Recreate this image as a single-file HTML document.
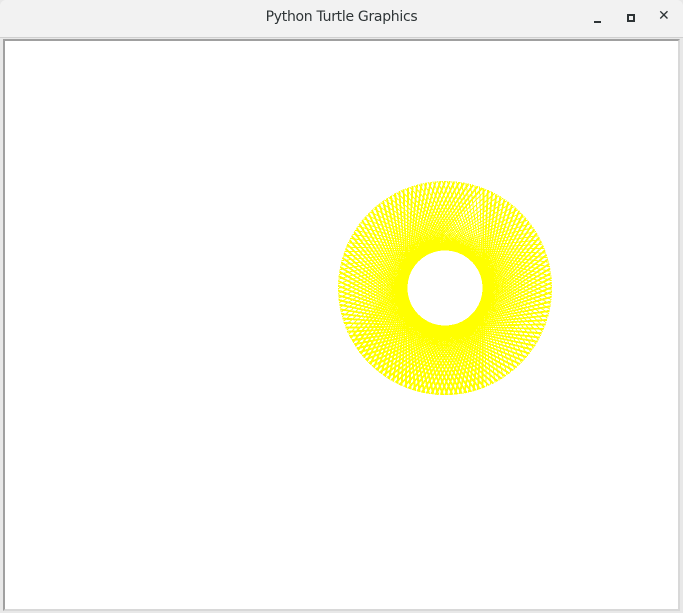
<!DOCTYPE html>
<html><head><style>
body{margin:0;width:683px;height:613px;overflow:hidden;background:#e8e8e8;font-family:"DejaVu Sans","Liberation Sans",sans-serif}
#tb{position:absolute;left:0;top:0;width:683px;height:37px;background:#f2f2f2;border-bottom:1px solid #d0d0d0;border-radius:6px 6px 0 0}
#tt{position:absolute;left:0;width:683px;top:9px;text-align:center;font-size:14px;color:#2e3436;letter-spacing:-0.3px}
#cv{position:absolute;left:3px;top:39px;width:673px;height:568px;background:#fff;border:2px solid #a0a0a0;border-right-color:#d8d8d8;border-bottom-color:#d8d8d8}
svg{position:absolute;left:0;top:0}
</style></head><body>
<div id="tb"><div id="tt">Python Turtle Graphics</div>
<div style="position:absolute;left:594px;top:21px;width:7px;height:2px;background:#2e3436"></div>
<div style="position:absolute;left:627px;top:14px;width:4px;height:4px;border:2px solid #2e3436"></div>
<div style="position:absolute;left:658px;top:8px;font-size:14px;font-weight:bold;color:#2e3436">✕</div>
</div>
<div id="cv"></div>
<svg id="s" width="683" height="613" shape-rendering="crispEdges"></svg>
<script>
var s=document.getElementById('s'),cx=445,cy=288,R=107,a=Math.acos(38/R),h='';
for(var i=0;i<230;i++){var t=i*2*Math.PI/230+i*0.017;
h+='<line x1="'+(cx+R*Math.cos(t-a)).toFixed(1)+'" y1="'+(cy+R*Math.sin(t-a)).toFixed(1)+'" x2="'+(cx+R*Math.cos(t+a)).toFixed(1)+'" y2="'+(cy+R*Math.sin(t+a)).toFixed(1)+'" stroke="#ffff00" stroke-width="1"/>';}
s.innerHTML=h;
</script>
</body></html>
